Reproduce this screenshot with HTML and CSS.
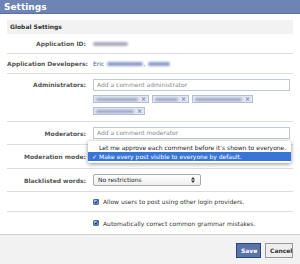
FILE: index.html
```html
<!DOCTYPE html>
<html>
<head>
<meta charset="utf-8">
<link rel="stylesheet" href="styles.css">
</head>
<body>
<div class="header">Settings</div>
<div class="panel">
  <div class="section-title">Global Settings</div>
  <div class="row r-id">
    <div class="label">Application ID:</div>
    <div class="value"><span class="blur" style="width:35px"></span></div>
  </div>
  <div class="row r-dev">
    <div class="label">Application Developers:</div>
    <div class="value"><span class="link">Eric</span><span class="blur blue" style="width:36px"></span><span class="link">,</span><span class="blur blue" style="width:22px"></span></div>
  </div>
  <div class="row r-admin">
    <div class="label">Administrators:</div>
    <div class="value col">
      <div class="input">Add a comment administrator</div>
      <div class="tags">
        <span class="tag"><span class="blur tb" style="width:42px"></span><span class="x">×</span></span>
        <span class="tag"><span class="blur tb" style="width:23px"></span><span class="x">×</span></span>
        <span class="tag"><span class="blur tb" style="width:47px"></span><span class="x">×</span></span>
        <span class="tag"><span class="blur tb" style="width:38px"></span><span class="x">×</span></span>
      </div>
    </div>
  </div>
  <div class="row r-mod">
    <div class="label">Moderators:</div>
    <div class="value"><div class="input">Add a comment moderator</div></div>
  </div>
  <div class="row r-mode">
    <div class="label">Moderation mode:</div>
    <div class="value"></div>
    <div class="menu">
      <div class="item">Let me approve each comment before it’s shown to everyone.</div>
      <div class="item sel"><span class="tick">✓</span>Make every post visible to everyone by default.</div>
    </div>
  </div>
  <div class="row r-black">
    <div class="label">Blacklisted words:</div>
    <div class="value">
      <div class="select">No restrictions<svg class="arrows" width="4" height="6" viewBox="0 0 4 6"><path d="M0 2.5 L2 0 L4 2.5Z M0 3.5 L2 6 L4 3.5Z" fill="#333"/></svg></div>
    </div>
  </div>
  <div class="row r-check">
    <div class="label"></div>
    <div class="value"><span class="cb">✓</span>Allow users to post using other login providers.</div>
  </div>
  <div class="row r-check2">
    <div class="label"></div>
    <div class="value"><span class="cb">✓</span>Automatically correct common grammar mistakes.</div>
  </div>
</div>
<div class="footer">
  <button class="btn save">Save</button>
  <button class="btn cancel">Cancel</button>
</div>
</body>
</html>
```
FILE: styles.css
```css
* { box-sizing: border-box; }
html, body { margin: 0; padding: 0; }
body {
  width: 300px;
  height: 264px;
  overflow: hidden;
  background: #fff;
  font-family: "DejaVu Sans", "Lucida Grande", sans-serif;
  font-size: 6px;
  color: #333;
  position: relative;
}
.header {
  height: 14px;
  background: #6d84b4;
  color: #fff;
  font-weight: bold;
  font-size: 9px;
  line-height: 14px;
  padding-left: 4px;
  border-bottom: 1px solid #5a6f9e;
}
.panel {
  margin: 0 7px;
  padding-top: 6px;
}
.section-title {
  height: 14px;
  line-height: 14px;
  background: #f2f2f2;
  font-weight: bold;
  color: #333;
  padding-left: 3px;
  font-size: 6px;
}
.row {
  display: grid;
  grid-template-columns: 79px 1fr;
  column-gap: 7px;
  align-items: center;
  border-bottom: 1px solid #dcdcdc;
  position: relative;
}
.label {
  text-align: right;
  font-weight: bold;
  color: #555;
  white-space: nowrap;
}
.value {
  display: flex;
  align-items: center;
  white-space: nowrap;
}
.value.col { flex-direction: column; align-items: stretch; }
.r-id { height: 20px; }
.r-dev { height: 20px; }
.r-admin { height: 48px; align-items: start; padding-top: 5px; }
.r-admin .label { line-height: 11px; }
.r-mod { height: 23px; }
.r-mode { height: 24px; }
.r-black { height: 23px; }
.r-check { height: 20px; }
.r-check2 { height: 22px; border-bottom: none; }
.blur {
  display: inline-block;
  height: 4px;
  background: #aab;
  filter: blur(1px);
  border-radius: 2px;
}
.blur.blue { background: #8d9ccc; margin-left: 3px; }
.link { color: #3b5998; }
.input {
  height: 12px;
  border: 1px solid #bdc7d8;
  line-height: 10px;
  padding-left: 3px;
  color: #888;
  width: 197px;
}
.tags {
  display: flex;
  flex-wrap: wrap;
  gap: 4px 3px;
  margin-top: 4px;
  width: 190px;
}
.tag {
  display: inline-flex;
  align-items: center;
  height: 8px;
  background: #e2e6f0;
  border: 1px solid #b6bfd6;
  padding: 0 2px;
}
.tb { background: #9aa6c6; margin-right: 3px; height: 3px; }
.x { color: #6d7fae; font-size: 6px; line-height: 6px; font-weight: bold; }
.menu {
  position: absolute;
  left: 81px;
  top: -4px;
  width: 203px;
  background: #fff;
  box-shadow: 0 1px 4px rgba(0,0,0,0.45);
  border-radius: 2px;
  padding: 2px 0;
  z-index: 2;
}
.item {
  height: 9px;
  line-height: 9px;
  padding-left: 11px;
  color: #222;
  white-space: nowrap;
}
.item.sel {
  background: #3875d7;
  color: #fff;
  padding-left: 4px;
}
.tick { display: inline-block; width: 7px; }
.select {
  width: 108px;
  height: 12px;
  border: 1px solid #aaa;
  border-radius: 2px;
  background: linear-gradient(#fff, #eee);
  line-height: 10px;
  padding-left: 4px;
  color: #222;
  position: relative;
}
.arrows { position: absolute; right: 5px; top: 2px; }
.cb {
  display: inline-block;
  width: 6px;
  height: 6px;
  border-radius: 1px;
  background: linear-gradient(#a9c7ee, #4d86d6);
  border: 1px solid #4e6fa8;
  color: #111;
  font-size: 7px;
  line-height: 4px;
  text-indent: 0;
  margin-right: 4px;
  font-weight: bold;
  overflow: visible;
}
.r-check .value, .r-check2 .value { color: #333; }
.footer {
  position: absolute;
  left: 0; right: 0; bottom: 0;
  height: 30px;
  background: #f2f2f2;
  border-top: 1px solid #ccc;
  display: flex;
  justify-content: flex-end;
  align-items: center;
  gap: 4px;
  padding-right: 7px;
  padding-top: 1px;
}
.btn {
  font-family: "DejaVu Sans", sans-serif;
  font-weight: bold;
  font-size: 6px;
  height: 15px;
  padding: 0 4px;
  margin: 0;
}
.save {
  background: #5b74a8;
  border: 1px solid #29447e;
  color: #fff;
  width: 25px;
}
.cancel {
  background: #eeeeee;
  border: 1px solid #999;
  color: #333;
  width: 28px;
}
```
